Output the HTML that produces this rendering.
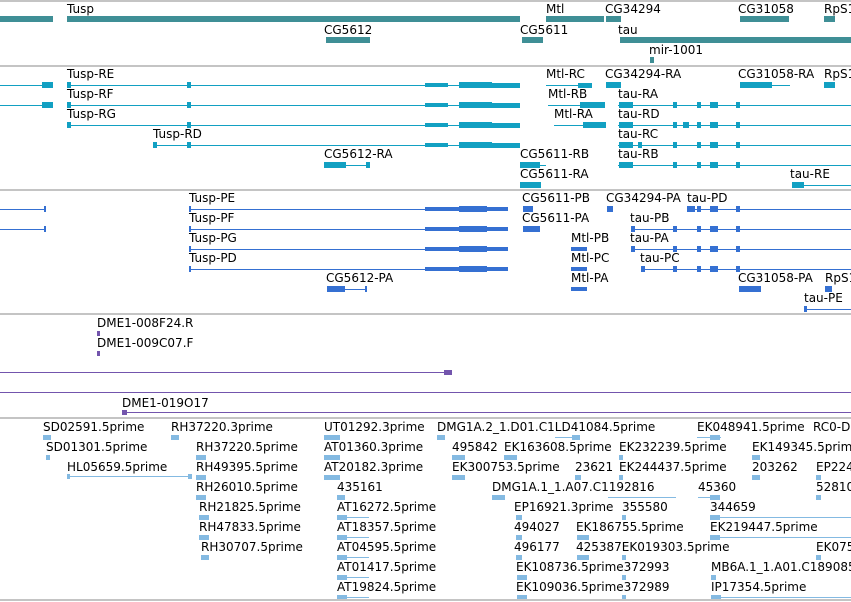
<!DOCTYPE html>
<html><head><meta charset="utf-8"><style>
body{margin:0;width:851px;height:602px;background:#fff;position:relative;overflow:hidden;font-family:"DejaVu Sans","Liberation Sans",sans-serif;}
.t{position:absolute;font-size:12px;line-height:12px;color:#000;white-space:nowrap;}
.d{position:absolute;left:0;width:851px;height:2px;background:#c4c4c4;}
i{position:absolute;display:block;}
.g i{background:#3f8f96}.r i{background:#12a0c2}.p i{background:#3570d2}.v i{background:#7355ad}.e i{background:#84bae2}
.m{width:4px;height:6px}
</style></head><body>
<div class="d" style="top:0"></div>
<div class="d" style="top:65px"></div><div class="d" style="top:189px"></div><div class="d" style="top:313px"></div><div class="d" style="top:417px"></div><div class="d" style="top:599px"></div>

<!-- genes -->
<div class="g">
<span class="t" style="left:67px;top:3px">Tusp</span>
<i style="left:0;top:16px;width:53px;height:6px"></i>
<i style="left:67px;top:16px;width:453px;height:6px"></i>
<span class="t" style="left:324px;top:24px">CG5612</span><i style="left:326px;top:37px;width:44px;height:6px"></i>
<span class="t" style="left:520px;top:24px">CG5611</span><i style="left:522px;top:37px;width:21px;height:6px"></i>
<span class="t" style="left:546px;top:3px">Mtl</span><i style="left:546px;top:16px;width:58px;height:6px"></i>
<span class="t" style="left:605px;top:3px">CG34294</span><i style="left:606px;top:16px;width:15px;height:6px"></i>
<span class="t" style="left:738px;top:3px">CG31058</span><i style="left:740px;top:16px;width:49px;height:6px"></i>
<span class="t" style="left:824px;top:3px">RpS1</span><i style="left:824px;top:16px;width:11px;height:6px"></i>
<span class="t" style="left:618px;top:24px">tau</span><i style="left:620px;top:37px;width:231px;height:6px"></i>
<span class="t" style="left:649px;top:44px">mir-1001</span><i style="left:650px;top:57px;width:4px;height:6px"></i>
</div>

<!-- transcripts -->
<div class="r">
<i style="left:0;top:85px;width:53px;height:1px"></i><i style="left:42px;top:82px;width:11px;height:6px"></i>
<i style="left:0;top:105px;width:53px;height:1px"></i><i style="left:42px;top:102px;width:11px;height:6px"></i>
<span class="t" style="left:67px;top:68px">Tusp-RE</span><span class="t" style="left:67px;top:88px">Tusp-RF</span><span class="t" style="left:67px;top:108px">Tusp-RG</span><span class="t" style="left:153px;top:128px">Tusp-RD</span>
<i style="left:67px;top:85px;width:453px;height:1px"></i><i style="left:67px;top:105px;width:453px;height:1px"></i><i style="left:67px;top:125px;width:453px;height:1px"></i><i style="left:153px;top:145px;width:367px;height:1px"></i>
<i class="m" style="left:67px;top:82px"></i><i class="m" style="left:187px;top:82px"></i><i class="m" style="left:67px;top:102px"></i><i class="m" style="left:187px;top:102px"></i><i class="m" style="left:67px;top:122px"></i><i class="m" style="left:187px;top:122px"></i><i class="m" style="left:153px;top:142px"></i><i class="m" style="left:187px;top:142px"></i>
<i style="left:425px;top:83px;width:23px;height:4px"></i><i style="left:459px;top:82px;width:33px;height:6px"></i><i style="left:492px;top:83px;width:28px;height:5px"></i>
<i style="left:425px;top:103px;width:23px;height:4px"></i><i style="left:459px;top:102px;width:33px;height:6px"></i><i style="left:492px;top:103px;width:28px;height:5px"></i>
<i style="left:425px;top:123px;width:23px;height:4px"></i><i style="left:459px;top:122px;width:33px;height:6px"></i><i style="left:492px;top:123px;width:28px;height:5px"></i>
<i style="left:425px;top:143px;width:23px;height:4px"></i><i style="left:459px;top:142px;width:33px;height:6px"></i><i style="left:492px;top:143px;width:28px;height:5px"></i>
<span class="t" style="left:546px;top:68px">Mtl-RC</span><i style="left:546px;top:85px;width:46px;height:1px"></i><i style="left:578px;top:83px;width:14px;height:5px"></i>
<span class="t" style="left:548px;top:88px">Mtl-RB</span><i style="left:548px;top:105px;width:57px;height:1px"></i><i style="left:580px;top:102px;width:25px;height:6px"></i>
<span class="t" style="left:554px;top:108px">Mtl-RA</span><i style="left:554px;top:125px;width:52px;height:1px"></i><i style="left:583px;top:122px;width:23px;height:6px"></i>
<span class="t" style="left:605px;top:68px">CG34294-RA</span><i style="left:606px;top:82px;width:15px;height:6px"></i>
<span class="t" style="left:738px;top:68px">CG31058-RA</span><i style="left:740px;top:82px;width:32px;height:6px"></i><i style="left:772px;top:85px;width:18px;height:1px"></i>
<span class="t" style="left:824px;top:68px">RpS1</span><i style="left:824px;top:82px;width:11px;height:6px"></i>
<span class="t" style="left:618px;top:88px">tau-RA</span><i style="left:618px;top:105px;width:233px;height:1px"></i><i style="left:619px;top:102px;width:14px;height:6px"></i>
<span class="t" style="left:618px;top:108px">tau-RD</span><i style="left:618px;top:125px;width:233px;height:1px"></i><i style="left:619px;top:122px;width:14px;height:6px"></i>
<span class="t" style="left:618px;top:128px">tau-RC</span><i style="left:618px;top:145px;width:233px;height:1px"></i><i style="left:619px;top:142px;width:14px;height:6px"></i>
<span class="t" style="left:618px;top:148px">tau-RB</span><i style="left:618px;top:165px;width:233px;height:1px"></i><i style="left:619px;top:162px;width:14px;height:6px"></i>
<i class="m" style="left:673px;top:102px"></i><i class="m" style="left:697px;top:102px"></i><i class="m" style="left:710px;top:102px;width:8px"></i><i class="m" style="left:736px;top:102px"></i>
<i class="m" style="left:673px;top:122px"></i><i class="m" style="left:683px;top:122px;width:6px"></i><i class="m" style="left:697px;top:122px"></i><i class="m" style="left:710px;top:122px;width:8px"></i><i class="m" style="left:736px;top:122px"></i>
<i class="m" style="left:638px;top:142px"></i><i class="m" style="left:673px;top:142px"></i><i class="m" style="left:697px;top:142px"></i><i class="m" style="left:710px;top:142px;width:8px"></i><i class="m" style="left:736px;top:142px"></i>
<i class="m" style="left:673px;top:162px"></i><i class="m" style="left:697px;top:162px"></i><i class="m" style="left:710px;top:162px;width:8px"></i><i class="m" style="left:736px;top:162px"></i>
<span class="t" style="left:790px;top:168px">tau-RE</span><i style="left:792px;top:185px;width:59px;height:1px"></i><i style="left:792px;top:182px;width:12px;height:6px"></i>
<span class="t" style="left:324px;top:148px">CG5612-RA</span><i style="left:324px;top:162px;width:22px;height:6px"></i><i style="left:346px;top:165px;width:24px;height:1px"></i><i class="m" style="left:366px;top:162px"></i>
<span class="t" style="left:520px;top:148px">CG5611-RB</span><i style="left:520px;top:162px;width:20px;height:6px"></i><i style="left:540px;top:165px;width:6px;height:1px"></i>
<span class="t" style="left:520px;top:168px">CG5611-RA</span><i style="left:520px;top:182px;width:21px;height:6px"></i>
</div>

<!-- proteins -->
<div class="p">
<i style="left:0;top:209px;width:46px;height:1px"></i><i style="left:44px;top:206px;width:2px;height:6px"></i>
<i style="left:0;top:229px;width:46px;height:1px"></i><i style="left:44px;top:226px;width:2px;height:6px"></i>
<span class="t" style="left:189px;top:192px">Tusp-PE</span><span class="t" style="left:189px;top:212px">Tusp-PF</span><span class="t" style="left:189px;top:232px">Tusp-PG</span><span class="t" style="left:189px;top:252px">Tusp-PD</span>
<i style="left:189px;top:209px;width:319px;height:1px"></i><i style="left:189px;top:229px;width:319px;height:1px"></i><i style="left:189px;top:249px;width:319px;height:1px"></i><i style="left:189px;top:269px;width:319px;height:1px"></i>
<i class="m" style="left:189px;top:206px;width:2px"></i><i class="m" style="left:189px;top:226px;width:2px"></i><i class="m" style="left:189px;top:246px;width:2px"></i><i class="m" style="left:189px;top:266px;width:2px"></i>
<i style="left:425px;top:207px;width:34px;height:4px"></i><i style="left:459px;top:206px;width:28px;height:6px"></i><i style="left:487px;top:207px;width:21px;height:4px"></i>
<i style="left:425px;top:227px;width:34px;height:4px"></i><i style="left:459px;top:226px;width:28px;height:6px"></i><i style="left:487px;top:227px;width:21px;height:4px"></i>
<i style="left:425px;top:247px;width:34px;height:4px"></i><i style="left:459px;top:246px;width:28px;height:6px"></i><i style="left:487px;top:247px;width:21px;height:4px"></i>
<i style="left:425px;top:267px;width:34px;height:4px"></i><i style="left:459px;top:266px;width:28px;height:6px"></i><i style="left:487px;top:267px;width:21px;height:4px"></i>
<span class="t" style="left:522px;top:192px">CG5611-PB</span><i style="left:523px;top:206px;width:10px;height:6px"></i>
<span class="t" style="left:522px;top:212px">CG5611-PA</span><i style="left:523px;top:226px;width:17px;height:6px"></i>
<span class="t" style="left:606px;top:192px">CG34294-PA</span><i style="left:607px;top:206px;width:6px;height:6px"></i>
<span class="t" style="left:687px;top:192px">tau-PD</span><i style="left:687px;top:209px;width:164px;height:1px"></i>
<span class="t" style="left:630px;top:212px">tau-PB</span><i style="left:631px;top:229px;width:220px;height:1px"></i>
<span class="t" style="left:630px;top:232px">tau-PA</span><i style="left:631px;top:249px;width:220px;height:1px"></i>
<span class="t" style="left:640px;top:252px">tau-PC</span><i style="left:641px;top:269px;width:210px;height:1px"></i>
<i class="m" style="left:687px;top:206px;width:8px"></i><i class="m" style="left:697px;top:206px"></i><i class="m" style="left:710px;top:206px;width:8px"></i><i class="m" style="left:736px;top:206px"></i>
<i class="m" style="left:631px;top:226px"></i><i class="m" style="left:673px;top:226px"></i><i class="m" style="left:697px;top:226px"></i><i class="m" style="left:710px;top:226px;width:8px"></i><i class="m" style="left:736px;top:226px"></i>
<i class="m" style="left:631px;top:246px"></i><i class="m" style="left:673px;top:246px"></i><i class="m" style="left:697px;top:246px"></i><i class="m" style="left:710px;top:246px;width:8px"></i><i class="m" style="left:736px;top:246px"></i>
<i class="m" style="left:641px;top:266px"></i><i class="m" style="left:673px;top:266px"></i><i class="m" style="left:697px;top:266px"></i><i class="m" style="left:710px;top:266px;width:8px"></i><i class="m" style="left:736px;top:266px"></i>
<span class="t" style="left:571px;top:232px">Mtl-PB</span><i style="left:571px;top:247px;width:16px;height:4px"></i>
<span class="t" style="left:571px;top:252px">Mtl-PC</span><i style="left:571px;top:267px;width:16px;height:4px"></i>
<span class="t" style="left:571px;top:272px">Mtl-PA</span><i style="left:571px;top:287px;width:16px;height:4px"></i>
<span class="t" style="left:326px;top:272px">CG5612-PA</span><i style="left:327px;top:286px;width:18px;height:6px"></i><i style="left:345px;top:289px;width:22px;height:1px"></i><i class="m" style="left:365px;top:286px;width:2px"></i>
<span class="t" style="left:738px;top:272px">CG31058-PA</span><i style="left:739px;top:286px;width:22px;height:6px"></i>
<span class="t" style="left:825px;top:272px">RpS1</span><i style="left:825px;top:286px;width:7px;height:6px"></i>
<span class="t" style="left:804px;top:292px">tau-PE</span><i style="left:804px;top:309px;width:47px;height:1px"></i><i class="m" style="left:804px;top:306px;width:3px"></i>
</div>

<!-- purple -->
<div class="v">
<span class="t" style="left:97px;top:317px">DME1-008F24.R</span><i style="left:97px;top:331px;width:3px;height:5px"></i>
<span class="t" style="left:97px;top:337px">DME1-009C07.F</span><i style="left:97px;top:351px;width:3px;height:5px"></i>
<i style="left:0;top:372px;width:452px;height:1px"></i><i style="left:444px;top:370px;width:8px;height:5px"></i>
<i style="left:0;top:392px;width:851px;height:1px"></i>
<span class="t" style="left:122px;top:397px">DME1-019O17</span><i style="left:122px;top:412px;width:729px;height:1px"></i><i style="left:122px;top:410px;width:5px;height:5px"></i>
</div>

<!-- ESTs -->
<div class="e">
<span class="t" style="left:43px;top:421px">SD02591.5prime</span><i style="left:43px;top:435px;width:8px;height:5px"></i>
<span class="t" style="left:171px;top:421px">RH37220.3prime</span><i style="left:171px;top:435px;width:8px;height:5px"></i>
<span class="t" style="left:324px;top:421px">UT01292.3prime</span><i style="left:324px;top:435px;width:16px;height:5px"></i>
<span class="t" style="left:437px;top:421px">DMG1A.2_1.D01.C1LD41084.5prime</span><i style="left:437px;top:435px;width:8px;height:5px"></i><i style="left:555px;top:437px;width:25px;height:1px"></i><i style="left:572px;top:435px;width:8px;height:5px"></i>
<span class="t" style="left:697px;top:421px">EK048941.5prime</span><i style="left:697px;top:437px;width:24px;height:1px"></i><i style="left:710px;top:435px;width:10px;height:5px"></i>
<span class="t" style="left:813px;top:421px">RC0-D</span>
<span class="t" style="left:46px;top:441px">SD01301.5prime</span><i style="left:46px;top:455px;width:4px;height:5px"></i>
<span class="t" style="left:196px;top:441px">RH37220.5prime</span><i style="left:196px;top:455px;width:10px;height:5px"></i>
<span class="t" style="left:324px;top:441px">AT01360.3prime</span><i style="left:324px;top:455px;width:16px;height:5px"></i>
<span class="t" style="left:452px;top:441px">495842</span><i style="left:452px;top:455px;width:13px;height:5px"></i>
<span class="t" style="left:504px;top:441px">EK163608.5prime</span><i style="left:504px;top:455px;width:13px;height:5px"></i>
<span class="t" style="left:619px;top:441px">EK232239.5prime</span><i style="left:619px;top:455px;width:4px;height:5px"></i>
<span class="t" style="left:752px;top:441px">EK149345.5prim</span><i style="left:752px;top:455px;width:8px;height:5px"></i>
<span class="t" style="left:67px;top:461px">HL05659.5prime</span><i style="left:67px;top:476px;width:125px;height:1px"></i><i style="left:67px;top:474px;width:3px;height:5px"></i><i style="left:188px;top:474px;width:4px;height:5px"></i>
<span class="t" style="left:196px;top:461px">RH49395.5prime</span><i style="left:196px;top:475px;width:10px;height:5px"></i>
<span class="t" style="left:324px;top:461px">AT20182.3prime</span><i style="left:324px;top:475px;width:16px;height:5px"></i>
<span class="t" style="left:452px;top:461px">EK300753.5prime</span><i style="left:452px;top:475px;width:13px;height:5px"></i>
<span class="t" style="left:575px;top:461px">23621</span><i style="left:575px;top:475px;width:6px;height:5px"></i>
<span class="t" style="left:619px;top:461px">EK244437.5prime</span><i style="left:619px;top:475px;width:4px;height:5px"></i>
<span class="t" style="left:752px;top:461px">203262</span><i style="left:752px;top:475px;width:8px;height:5px"></i>
<span class="t" style="left:816px;top:461px">EP224</span><i style="left:816px;top:475px;width:5px;height:5px"></i>
<span class="t" style="left:196px;top:481px">RH26010.5prime</span><i style="left:196px;top:495px;width:10px;height:5px"></i>
<span class="t" style="left:337px;top:481px">435161</span><i style="left:337px;top:495px;width:8px;height:5px"></i>
<span class="t" style="left:492px;top:481px">DMG1A.1_1.A07.C1192816</span><i style="left:492px;top:495px;width:13px;height:5px"></i><i style="left:608px;top:497px;width:68px;height:1px"></i>
<span class="t" style="left:698px;top:481px">45360</span><i style="left:698px;top:497px;width:22px;height:1px"></i><i style="left:710px;top:495px;width:10px;height:5px"></i>
<span class="t" style="left:816px;top:481px">52810</span><i style="left:816px;top:495px;width:5px;height:5px"></i>
<span class="t" style="left:199px;top:501px">RH21825.5prime</span><i style="left:199px;top:515px;width:10px;height:5px"></i>
<span class="t" style="left:337px;top:501px">AT16272.5prime</span><i style="left:337px;top:517px;width:32px;height:1px"></i><i style="left:337px;top:515px;width:10px;height:5px"></i>
<span class="t" style="left:514px;top:501px">EP16921.3prime</span><i style="left:516px;top:515px;width:6px;height:5px"></i>
<span class="t" style="left:622px;top:501px">355580</span><i style="left:622px;top:515px;width:4px;height:5px"></i>
<span class="t" style="left:710px;top:501px">344659</span><i style="left:710px;top:517px;width:141px;height:1px"></i><i style="left:710px;top:515px;width:10px;height:5px"></i>
<span class="t" style="left:199px;top:521px">RH47833.5prime</span><i style="left:199px;top:535px;width:10px;height:5px"></i>
<span class="t" style="left:337px;top:521px">AT18357.5prime</span><i style="left:337px;top:537px;width:32px;height:1px"></i><i style="left:337px;top:535px;width:10px;height:5px"></i>
<span class="t" style="left:514px;top:521px">494027</span><i style="left:516px;top:535px;width:6px;height:5px"></i>
<span class="t" style="left:576px;top:521px">EK186755.5prime</span><i style="left:577px;top:535px;width:12px;height:5px"></i>
<span class="t" style="left:710px;top:521px">EK219447.5prime</span><i style="left:710px;top:537px;width:141px;height:1px"></i><i style="left:710px;top:535px;width:10px;height:5px"></i>
<span class="t" style="left:201px;top:541px">RH30707.5prime</span><i style="left:201px;top:555px;width:8px;height:5px"></i>
<span class="t" style="left:337px;top:541px">AT04595.5prime</span><i style="left:337px;top:557px;width:32px;height:1px"></i><i style="left:337px;top:555px;width:10px;height:5px"></i>
<span class="t" style="left:514px;top:541px">496177</span><i style="left:516px;top:555px;width:6px;height:5px"></i>
<span class="t" style="left:576px;top:541px">425387EK019303.5prime</span><i style="left:577px;top:555px;width:12px;height:5px"></i><i style="left:622px;top:555px;width:4px;height:5px"></i>
<span class="t" style="left:816px;top:541px">EK075</span><i style="left:816px;top:555px;width:5px;height:5px"></i>
<span class="t" style="left:337px;top:561px">AT01417.5prime</span><i style="left:337px;top:577px;width:32px;height:1px"></i><i style="left:337px;top:575px;width:10px;height:5px"></i>
<span class="t" style="left:516px;top:561px">EK108736.5prime372993</span><i style="left:517px;top:575px;width:10px;height:5px"></i><i style="left:622px;top:575px;width:4px;height:5px"></i>
<span class="t" style="left:711px;top:561px">MB6A.1_1.A01.C189085</span><i style="left:711px;top:575px;width:5px;height:5px"></i>
<span class="t" style="left:337px;top:581px">AT19824.5prime</span><i style="left:337px;top:597px;width:32px;height:1px"></i><i style="left:337px;top:595px;width:10px;height:4px"></i>
<span class="t" style="left:516px;top:581px">EK109036.5prime372989</span><i style="left:517px;top:595px;width:10px;height:4px"></i><i style="left:622px;top:595px;width:4px;height:4px"></i>
<span class="t" style="left:711px;top:581px">IP17354.5prime</span><i style="left:711px;top:597px;width:140px;height:1px"></i><i style="left:711px;top:595px;width:10px;height:4px"></i>
</div>
</body></html>
